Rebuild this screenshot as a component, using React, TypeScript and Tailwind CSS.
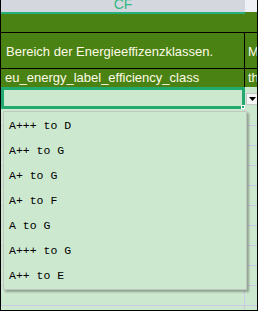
import React from "react";

const options = [
  "A+++ to D",
  "A++ to G",
  "A+ to G",
  "A+ to F",
  "A to G",
  "A+++ to G",
  "A++ to E",
];

const sheet = { fontFamily: '"Liberation Sans", Arial, sans-serif' };
const mono = { fontFamily: '"Liberation Mono", "Courier New", monospace' };

export default function App() {
  return (
    <div
      className="relative h-[311px] w-[258px] overflow-hidden border-x border-b border-black bg-[#cce8cf]"
      style={sheet}
    >
      {/* column header */}
      <div className="flex h-[12px]">
        <div className="flex w-[244px] items-end justify-center overflow-hidden bg-[#d5d7de] pb-[1px] text-[14px] leading-none text-[#2fb884]">
          CF
        </div>
        <div className="flex-1 bg-[#eef0f5]" />
      </div>
      <div className="flex h-[2px]">
        <div className="w-[244px] bg-[#27b07c]" />
        <div className="flex-1 bg-[#4a8214]" />
      </div>

      {/* green rows */}
      <div className="h-[19px] border-b border-black bg-[#4a8214]" />
      <div className="grid h-[36px] grid-cols-[244px_1fr] border-b border-black bg-[#4a8214] text-[13px] text-[#fffbe6]">
        <div className="flex items-center overflow-hidden whitespace-nowrap border-r border-black pl-[5px] pt-[3px]">
          Bereich der Energieeffizenzklassen.
        </div>
        <div className="flex items-center overflow-hidden whitespace-nowrap pl-[3px] pt-[3px]">M</div>
      </div>
      <div className="grid h-[18px] grid-cols-[244px_1fr] bg-[#4a8214] text-[13px] text-[#fffbe6]">
        <div className="flex items-center overflow-hidden whitespace-nowrap border-r border-black pl-[4px]">
          eu_energy_label_efficiency_class
        </div>
        <div className="flex items-center overflow-hidden whitespace-nowrap pl-[3px]">th</div>
      </div>

      {/* selected cell row */}
      <div className="grid h-[22px] grid-cols-[244px_1fr]">
        <div className="relative border-[3px] border-[#21a96f] bg-[#cce8cf]">
          <div className="absolute -bottom-[3px] -right-[3px] h-[4px] w-[4px] border border-white bg-[#21a96f]" />
        </div>
        <div className="flex items-center justify-center pl-[1px] pt-[2px]">
          <div className="flex h-[12px] w-[12px] items-center justify-center border border-[#c8c8c8] bg-[#f4f4f4]">
            <svg width="7" height="4" viewBox="0 0 7 4">
              <path d="M0 0h7L3.5 4z" fill="#000" />
            </svg>
          </div>
        </div>
      </div>

      {/* empty grid rows */}
      <div className="grid h-[17px] grid-cols-[244px_1fr] border-b border-[#c9cbe4]">
        <div className="border-r border-[#c9cbe4]" />
        <div />
      </div>
      {Array.from({ length: 10 }).map((_, i) => (
        <div key={i} className="grid h-[20px] grid-cols-[244px_1fr] border-b border-[#c9cbe4]">
          <div className="border-r border-[#c9cbe4]" />
          <div />
        </div>
      ))}

      {/* dropdown list */}
      <div className="absolute left-[2px] top-[111px] w-[244px] border border-[#bfc7bf] bg-[#cce8cf] py-[1px] shadow-[2px_2px_2px_rgba(0,0,0,0.3)]">
        {options.map((o) => (
          <div
            key={o}
            className="flex h-[25px] items-center whitespace-pre pl-[5px] text-[11.5px] text-black"
            style={mono}
          >
            {o}
          </div>
        ))}
      </div>
    </div>
  );
}
